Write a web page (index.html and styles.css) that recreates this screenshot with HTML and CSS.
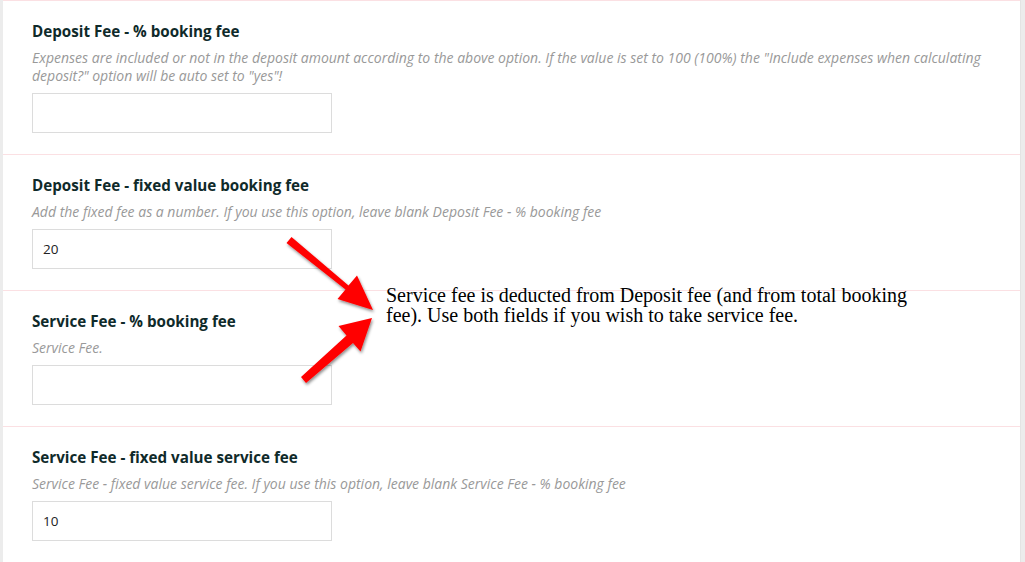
FILE: index.html
```html
<!DOCTYPE html>
<html>
<head>
<meta charset="utf-8">
<link rel="stylesheet" href="styles.css">
</head>
<body>
<div class="page">
  <div class="panel">
    <div class="field">
      <div class="label">Deposit Fee - % booking fee</div>
      <div class="desc">Expenses are included or not in the deposit amount according to the above option. If the value is set to 100 (100%) the "Include expenses when calculating deposit?" option will be auto set to "yes"!</div>
      <div class="input"></div>
    </div>
    <div class="field">
      <div class="label">Deposit Fee - fixed value booking fee</div>
      <div class="desc">Add the fixed fee as a number. If you use this option, leave blank Deposit Fee - % booking fee</div>
      <div class="input">20</div>
    </div>
    <div class="field">
      <div class="label">Service Fee - % booking fee</div>
      <div class="desc">Service Fee.</div>
      <div class="input"></div>
    </div>
    <div class="field">
      <div class="label">Service Fee - fixed value service fee</div>
      <div class="desc">Service Fee - fixed value service fee. If you use this option, leave blank Service Fee - % booking fee</div>
      <div class="input">10</div>
    </div>
  </div>
  <svg class="arrows" width="1025" height="562" viewBox="0 0 1025 562">
    <defs>
      <filter id="sh" x="-20%" y="-20%" width="140%" height="140%">
        <feDropShadow dx="1" dy="2" stdDeviation="1.5" flood-color="#000" flood-opacity="0.45"/>
      </filter>
    </defs>
    <g fill="#ff0000" filter="url(#sh)">
      <polygon points="286.5,243 291.5,237 348.5,285.5 357,275.5 373,310 337.5,299 345.5,289.5"/>
      <polygon points="301,377 306,383 353,343 360.5,351.5 372,318 338.5,326 346.5,335.5"/>
    </g>
  </svg>
  <div class="note">Service fee is deducted from Deposit fee (and from total booking fee). Use both fields if you wish to take service fee.</div>
</div>
</body>
</html>
```
FILE: styles.css
```css
html, body {
  margin: 0;
  padding: 0;
  background: #ffffff;
}
.page {
  position: relative;
  width: 1025px;
  height: 562px;
  overflow: hidden;
  background: #ececec;
}
.panel {
  margin-left: 3px;
  width: 1018px;
  height: 562px;
  border-right: 1px solid #e4e4e4;
  box-sizing: border-box;
  background: #fff;
}
.field {
  box-sizing: border-box;
  border-top: 1px solid #fbe0e3;
  padding: 20px 0 21px 29px;
}
.label {
  font-family: "Open Sans", sans-serif;
  font-weight: 700;
  font-size: 15.2px;
  line-height: 20px;
  color: #0f2a2a;
  margin-bottom: 8px;
}
.desc {
  font-family: "Open Sans", sans-serif;
  font-style: italic;
  font-size: 14px;
  line-height: 18px;
  color: #999999;
  width: 955px;
  margin-bottom: 8px;
}
.input {
  width: 300px;
  height: 40px;
  box-sizing: border-box;
  border: 1px solid #dcdcdc;
  font-family: "Open Sans", sans-serif;
  font-size: 13.5px;
  line-height: 38px;
  padding-left: 10px;
  color: #222;
}
.arrows {
  position: absolute;
  left: 0;
  top: 0;
  pointer-events: none;
}
.note {
  position: absolute;
  left: 386px;
  top: 285px;
  width: 535px;
  font-family: "Liberation Serif", "Times New Roman", serif;
  font-size: 20px;
  line-height: 20px;
  color: #000;
}
```
